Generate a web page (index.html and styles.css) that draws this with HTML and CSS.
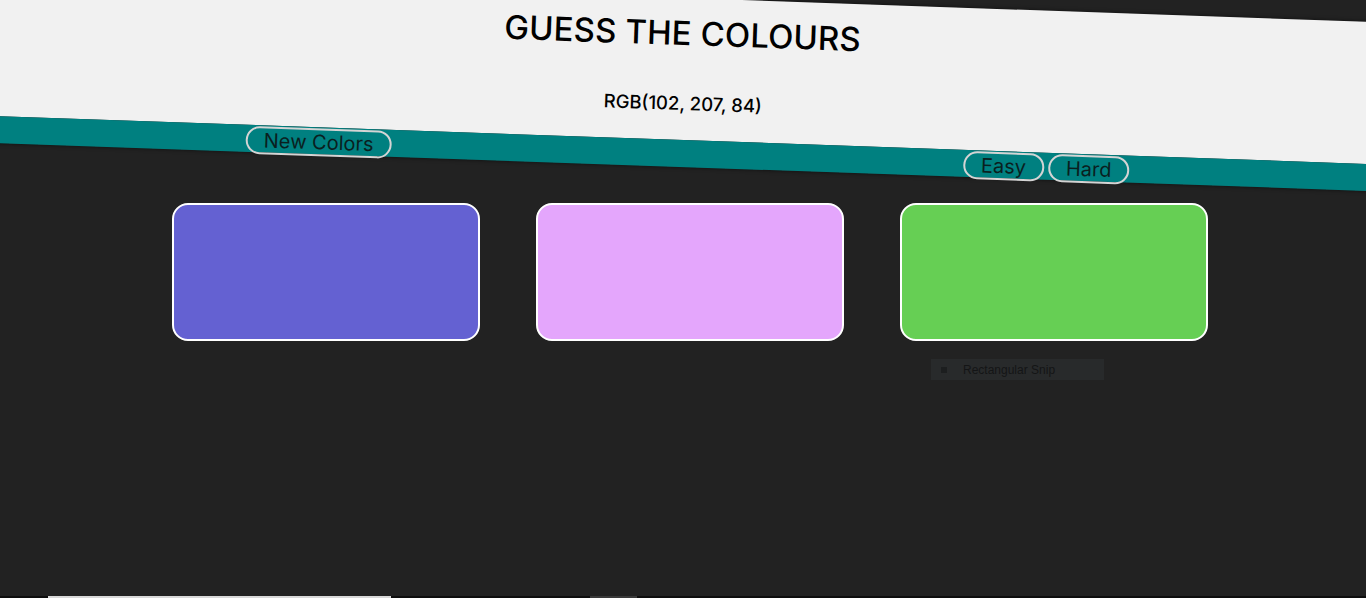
FILE: index.html
```html
<!DOCTYPE html>
<html lang="en">
<head>
<meta charset="utf-8">
<title>Guess the Colours</title>
<link rel="stylesheet" href="styles.css">
</head>
<body>
  <header class="banner">
    <div class="banner-top">
      <h1 class="title">GUESS THE COLOURS</h1>
      <p class="rgb">RGB(102, 207, 84)</p>
    </div>
    <div class="stripe">
      <div class="stripe-cell">
        <button class="pill">New Colors</button>
      </div>
      <div class="stripe-cell modes">
        <button class="pill">Easy</button>
        <button class="pill">Hard</button>
      </div>
    </div>
  </header>

  <main class="board">
    <div class="card card-purple"></div>
    <div class="card card-pink"></div>
    <div class="card card-green"></div>
  </main>

  <div class="snip">
    <span class="snip-icon"></span>
    <span class="snip-text">Rectangular Snip</span>
  </div>

  <footer class="taskbar">
    <span class="task-search"></span>
    <span class="task-item"></span>
  </footer>
</body>
</html>
```

FILE: styles.css
```css
html, body {
  height: 100%;
}

body {
  margin: 0;
  background: #222222;
  font-family: Inter, "DejaVu Sans", sans-serif;
  display: flex;
  flex-direction: column;
  overflow: hidden;
  position: relative;
}

.banner {
  margin: -2px -12px 0;
  transform: rotate(2deg);
  transform-origin: 50% 50%;
  box-shadow: 0 0 4px rgba(0, 0, 0, 0.6);
}

.banner-top {
  background: #f1f1f1;
  height: 142px;
  box-sizing: border-box;
  padding: 15px 4px 0 0;
  text-align: center;
  color: #000;
}

.title {
  margin: 0;
  font-size: 33px;
  line-height: 40px;
  font-weight: 500;
  letter-spacing: 0.1px;
}

.rgb {
  margin: 38px 0 0;
  padding-left: 5px;
  font-size: 18.5px;
  line-height: 24px;
  font-weight: 500;
}

.stripe {
  background: #008080;
  height: 27px;
  display: grid;
  grid-template-columns: 1fr 1fr;
  column-gap: 90px;
  padding: 0 10px 0 14px;
}

.stripe-cell {
  display: flex;
  justify-content: center;
  align-items: center;
}

.modes {
  gap: 4px;
}

.pill {
  font-family: Inter, "DejaVu Sans", sans-serif;
  font-size: 20px;
  font-weight: 400;
  color: #0a1f1f;
  background: transparent;
  border: 2px solid #d4d4d4;
  border-radius: 14px;
  height: 28px;
  padding: 0 16px;
  line-height: 22px;
  margin-top: 1px;
}

.board {
  margin-top: 36px;
  display: flex;
  justify-content: center;
  gap: 56px;
  padding-left: 14px;
}

.card {
  width: 308px;
  height: 138px;
  box-sizing: border-box;
  border: 2px solid #ffffff;
  border-radius: 16px;
}

.card-purple { background: #6461d2; }
.card-pink   { background: #e4a6fc; }
.card-green  { background: #66cf54; }

.snip {
  position: absolute;
  left: 931px;
  top: 359px;
  width: 173px;
  height: 21px;
  background: #282a2b;
  display: flex;
  align-items: center;
  gap: 16px;
  padding-left: 10px;
  box-sizing: border-box;
}

.snip-icon {
  width: 6px;
  height: 6px;
  background: #1c1e1f;
}

.snip-text {
  font-family: "Liberation Sans", sans-serif;
  font-size: 12px;
  color: #141516;
}

.taskbar {
  margin-top: auto;
  height: 2px;
  background: #0e0e0e;
  display: flex;
  padding-left: 48px;
}

.task-search {
  width: 343px;
  height: 2px;
  background: #d9d9d9;
}

.task-item {
  width: 47px;
  height: 2px;
  margin-left: 199px;
  background: #3a3a3a;
}
```
